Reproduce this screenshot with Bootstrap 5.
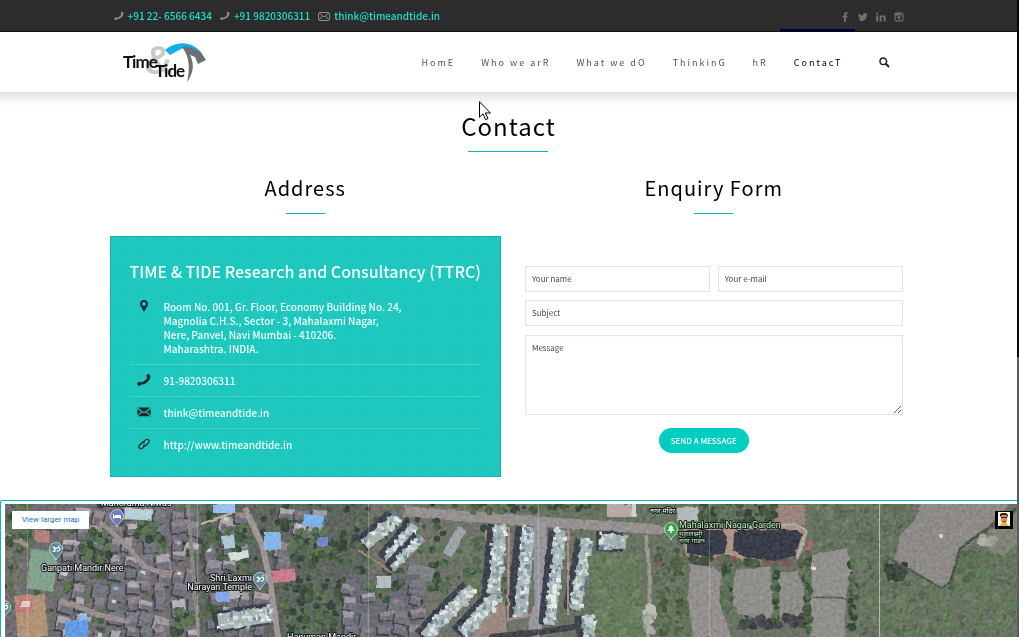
<!DOCTYPE html>
<html lang="en">
<head>
<meta charset="utf-8">
<meta name="viewport" content="width=device-width, initial-scale=1">
<title>Contact - Time &amp; Tide</title>
<link href="https://cdn.jsdelivr.net/npm/bootstrap@5.3.0/dist/css/bootstrap.min.css" rel="stylesheet">
<style>
  :root { --teal: #1ec8be; --teal-dark: #0cb8ae; }
  body { font-family: "Noto Sans CJK SC", "Open Sans", sans-serif; font-size: 10px; line-height: 14px; color: #000; padding-right: 2px; }
  a { text-decoration: none; }
  .page-width { width: 100%; max-width: 798px; }
  .top-strip { background: #2c2c2c; border-bottom: 1px solid #111; height: 32px; padding-top: 1px; font-weight: 500; }
  .top-strip a { color: #21ddcf; }
  .top-strip svg { fill: #8a8a8a; }
  .top-strip .social svg { fill: #707070; }
  .site-head { height: 60px; }
  .head-shadow { height: 14px; background: linear-gradient(#dfe2e1, #f4f6f5 60%, #fff); }
  .main-menu { gap: 26px; font-size: 9px; letter-spacing: 2px; padding-top: 2px; margin-right: 36px; }
  .main-menu a { color: #4c5260; }
  .main-menu a.current { color: #000; position: relative; }
  .main-menu a.current::before { content: ""; position: absolute; left: -14px; right: -12px; top: -27px; height: 3px; background: #02022e; }
  .search { margin-right: 18px; }
  h1 { font-size: 24px; line-height: 36px; letter-spacing: 1px; font-weight: 400; margin: 0 0 7px; padding-top: 2px; }
  h2 { font-size: 20px; line-height: 28px; letter-spacing: 1px; font-weight: 400; margin: 0 0 11px; }
  .rule { height: 1px; background: var(--teal-dark); width: 80px; }
  .rule-short { width: 39px; margin-bottom: 22px; }
  .blocks { margin-top: 22px; }
  .two-up { grid-template-columns: 389fr 380fr; column-gap: 24px; padding-right: 5px; }
  .info-panel { background-color: var(--teal); background-image: radial-gradient(#2fccc2 1px, transparent 1px), radial-gradient(#1bc2b8 1px, transparent 1px); background-size: 14px 10px, 14px 10px; background-position: 0 0, 7px 5px; border: 1px solid var(--teal-dark); color: #f4fffd; padding: 20px 19px 16px; font-weight: 500; }
  .info-panel h3 { font-size: 16px; line-height: 28px; font-weight: 500; margin: 0 0 6px; white-space: nowrap; }
  .info-panel a { color: inherit; }
  .info-panel li { display: flex; padding: 9px 0 8px; border-top: 1px solid #3fd2c8; }
  .info-panel li:first-child { border-top: 0; }
  .info-panel li svg { width: 14px; height: 12px; flex: none; margin: 0 13px 0 7px; fill: #22282b; }
  .enquiry { padding-top: 30px; }
  .field { border: 1px solid #e3e3e3; border-radius: 0; font-size: 8px; line-height: 14px; padding: 5px 6px; color: #333; background: #fff; box-shadow: inset 0 0 2px #f4f4f4; }
  .field::placeholder { color: #4b4b4b; opacity: 1; }
  textarea.field { height: 80px; margin-top: 9px; }
  .send-row { padding-right: 20px; margin-top: 13px; }
  .send { background: #00cec3; color: #fff; font-size: 8px; line-height: 13px; font-weight: 500; padding: 6px 12px; border: 0; border-radius: 13px; }
  .send:hover { background: var(--teal-dark); color: #fff; }
  .map-frame { border: 1px solid var(--teal-dark); border-bottom: 0; border-right: 0; border-radius: 3px 0 0 0; padding: 3px 0 0 4px; min-height: 136px; margin-top: 23px; }
  .map-frame svg.satellite { position: absolute; inset: 0; width: 100%; height: 100%; }
  .satellite text { font-family: Roboto, "Noto Sans", sans-serif; font-size: 9px; fill: #fff; stroke: #15181a; stroke-width: 2px; paint-order: stroke; stroke-linejoin: round; }
  .satellite .park { fill: #b9f5b4; }
  .larger { left: 7px; top: 7px; width: 77px; font: 8px/18px Roboto, sans-serif; background: #fff; color: #2272c3; }
  .avatar { right: 4px; top: 7px; width: 18px; height: 18px; background: #000; }
  .scroll-track { position: fixed; right: 0; top: 0; bottom: 0; width: 2px; background: #5c5c5c; }
  .scroll-track span { display: block; height: 56%; background: #0a0a0c; }
  .pointer { position: absolute; left: 18px; top: -5px; }
</style>
</head>
<body class="d-flex flex-column min-vh-100 overflow-hidden">
<svg class="d-none" xmlns="http://www.w3.org/2000/svg">
  <symbol id="i-phone" viewBox="0 0 14 12"><path d="M9.800.8C10.500-.1 11.600-.1 12.300.6l1 1.200c.5 3.900-3.700 8.400-8.400 8.600L4.300 11 1.500 12 .3 10.300c-.3-.9 0-1.500.7-1.800l2.300-.7 1.200.7c2.700-.9 5-3 5.700-4.900L9.600 2.700z"/></symbol>
  <symbol id="i-mail" viewBox="0 0 14 12"><path d="M.5 1.500h13L7 6.200zM.3 3l4 2.700L.3 9.200zM13.700 3l-4 2.700 4 3.500zM5.200 6.300 7 7.500l1.800-1.200 4.400 4H.8z"/></symbol>
</svg>

<div class="top-strip">
  <div class="page-width mx-auto d-flex align-items-center h-100 ps-1 pe-1">
    <svg width="10" height="10" class="me-1"><use href="#i-phone"/></svg><a href="tel:+912265666434">+91 22- 6566 6434</a>
    <svg width="10" height="10" class="me-1 ms-2"><use href="#i-phone"/></svg><a href="tel:+919820306311">+91 9820306311</a>
    <svg width="12" height="9" viewBox="0 0 12 9" class="me-1 ms-2"><path fill="none" stroke="#8a8a8a" d="M1.500.5h9l1 1v6l-1 1h-9l-1-1v-6zM1 1l5 4 5-4M1 8l3.500-4M11 8 7.500 4"/></svg><a href="mailto:think@timeandtide.in">think@timeandtide.in</a>
    <div class="social d-flex gap-2 ms-auto">
      <a href="#" aria-label="Facebook"><svg width="10" height="10" viewBox="0 0 10 10"><path d="M4 10V5.500H2.500V3.700H4V2.400C4 .9 4.800.2 6.200.2h1.300V2H6.600c-.5 0-.7.200-.7.700v1h1.600l-.2 1.800H5.900V10z"/></svg></a>
      <a href="#" aria-label="Twitter"><svg width="10" height="10" viewBox="0 0 10 10"><path d="M0 8.100c1.200 0 2-.2 2.800-.8C1.800 7.200 1.200 6.700.9 5.900h.9C.8 5.500.3 4.800.3 3.800l.9.3C.2 3.300.1 2.300.6 1.300 1.800 2.700 3.200 3.400 4.900 3.500 4.700 1.900 5.600.9 6.900.9c.6 0 1.100.2 1.500.6L9.700 1 8.800 2.200l1.200-.3-1.100 1.200C9 6.500 6.600 9.100 3.300 9.100 2.100 9.100 1 8.800 0 8.100z"/></svg></a>
      <a href="#" aria-label="LinkedIn"><svg width="10" height="10" viewBox="0 0 10 10"><path d="M.2 3.400h2V9.500h-2zM1.200.5a1.100 1.100 0 110 2.200 1.100 1.100 0 010-2.200zM3.600 3.400h1.900v.8C6.600 2.700 9.800 2.900 9.800 6v3.500h-2V6.400C7.800 4.400 5.600 4.500 5.600 6.400v3.100h-2z"/></svg></a>
      <a href="#" aria-label="Instagram"><svg width="10" height="10" viewBox="0 0 10 10"><path fill-rule="evenodd" d="M1.500.5h7l1 1v7l-1 1h-7l-1-1v-7zM7 1.500V3h1.500V1.500zM.5 4h1.600v.8H1.500v3.400h7V4.800H7.900V4H9.500v-.3H6.800L5 3 3.200 3.700H.5zM5 3.900a1.500 1.500 0 100 3 1.500 1.500 0 000-3z"/></svg></a>
    </div>
  </div>
</div>

<header class="site-head">
  <div class="page-width mx-auto d-flex align-items-center h-100">
    <a href="#" class="ms-2 ps-1" aria-label="Time and Tide">
      <svg width="86" height="46" viewBox="0 0 86 46" class="d-block" font-family="Lato, sans-serif" font-weight="700">
        <text x="22" y="35" font-size="40" font-family="Liberation Sans, sans-serif" fill="#c9c9c9">&amp;</text>
        <path fill="#0fb0ea" d="M43 11C56 0 73 3 81 16L61 9 48 16z"/>
        <path fill="#6f7074" d="M60 8c11-1 19 4 24 13l-8 4-3-7-5-2C73 26 71 35 65 43 68 31 68 18 60 8z"/>
        <text x="1" y="29" font-size="17" letter-spacing="-1" fill="#111">Time</text>
        <text x="33" y="38" font-size="17" letter-spacing="-1" fill="#111">Tide</text>
      </svg>
    </a>
    <nav class="main-menu d-flex align-items-center ms-auto" aria-label="Main">
      <a href="#">HomE</a><a href="#">Who we arR</a><a href="#">What we dO</a><a href="#">ThinkinG</a><a href="#">hR</a><a href="#" class="current">ContacT</a>
    </nav>
    <a href="#" class="search" aria-label="Search"><svg width="11" height="11" viewBox="0 0 11 11" class="d-block"><path fill="none" stroke="#222" stroke-width="1.500" d="M4.300 1a3.300 3.300 0 110 6.600 3.300 3.300 0 010-6.600z"/><path stroke="#222" stroke-width="2" d="M6.800 6.700l3.300 3.300"/></svg></a>
  </div>
</header>
<div class="head-shadow"></div>

<main class="flex-grow-1 d-flex flex-column">
  <div class="text-center position-relative mx-auto">
    <h1>Contact</h1>
    <svg class="pointer" width="12" height="20" viewBox="0 0 12 20"><path fill="#fff" stroke="#000" d="M.5.700v15.500l3.500-3.400 2.600 5.800 2.400-1-2.600-5.600h5z"/></svg>
    <div class="rule mx-auto"></div>
  </div>
  <div class="page-width mx-auto blocks">
    <div class="two-up d-grid">
      <section>
        <h2 class="text-center">Address</h2>
        <div class="rule rule-short mx-auto"></div>
        <div class="info-panel">
          <h3>TIME &amp; TIDE Research and Consultancy (TTRC)</h3>
          <ul class="list-unstyled m-0">
            <li><svg viewBox="0 0 14 12"><path fill-rule="evenodd" d="M7 0c2.300 0 3.900 1.600 3.900 3.700C10.900 6.300 8.500 8.500 7 12 5.500 8.500 3.100 6.300 3.100 3.700 3.100 1.600 4.700 0 7 0zm0 1.900a2 2 0 100 4 2 2 0 000-4z"/></svg><span>Room No. 001, Gr. Floor, Economy Building No. 24,<br>Magnolia C.H.S., Sector - 3, Mahalaxmi Nagar,<br>Nere, Panvel, Navi Mumbai - 410206.<br>Maharashtra. INDIA.</span></li>
            <li><svg><use href="#i-phone"/></svg><a href="tel:919820306311">91-9820306311</a></li>
            <li><svg><use href="#i-mail"/></svg><a href="mailto:think@timeandtide.in">think@timeandtide.in</a></li>
            <li><svg viewBox="0 0 14 12"><g fill="none" stroke="#22282b" stroke-width="1.200"><path d="M6 4.500l2.500-2.600c1.500-1.500 5 .2 3.200 2.600L9.400 7C8.300 8 6.700 7.500 6.200 6.600"/><path d="M8 7.500l-2.500 2.600C4 11.600.5 9.900 2.300 7.500L4.600 5c1.100-1 2.700-.5 3.200.4"/></g></svg><a href="http://www.timeandtide.in">http://www.timeandtide.in</a></li>
          </ul>
        </div>
      </section>
      <section>
        <h2 class="text-center">Enquiry Form</h2>
        <div class="rule rule-short mx-auto"></div>
        <form class="enquiry">
          <div class="d-flex gap-2 mb-2">
            <input class="field form-control" type="text" placeholder="Your name" aria-label="Your name">
            <input class="field form-control" type="email" placeholder="Your e-mail" aria-label="Your e-mail">
          </div>
          <input class="field form-control" type="text" placeholder="Subject" aria-label="Subject">
          <textarea class="field form-control" placeholder="Message" aria-label="Message"></textarea>
          <div class="text-center send-row"><button type="button" class="btn send">SEND A MESSAGE</button></div>
        </form>
      </section>
    </div>
  </div>
  <section class="map-frame d-flex flex-grow-1" aria-label="Map">
    <div class="position-relative flex-grow-1 overflow-hidden">
      <svg class="satellite" viewBox="5 504 1012 133" preserveAspectRatio="xMinYMin slice" xmlns="http://www.w3.org/2000/svg">
        <defs>
          <filter id="rough" x="0" y="0" width="100%" height="100%"><feTurbulence type="fractalNoise" baseFrequency=".12" numOctaves="2" seed="4" result="n"/><feDisplacementMap in="SourceGraphic" in2="n" scale="3" xChannelSelector="R" yChannelSelector="G"/><feGaussianBlur stdDeviation=".5"/></filter>
          <filter id="speckle" x="0" y="0" width="100%" height="100%"><feTurbulence type="fractalNoise" baseFrequency=".3" numOctaves="3" seed="9"/><feColorMatrix values=".7 .7 0 0 -.15  .7 .7 0 0 -.15  .7 .7 0 0 -.15  0 0 0 0 1"/></filter>
        </defs>
        <rect x="5" y="504" width="1012" height="133" fill="#56604f"/>
        <g id="ground" filter="url(#rough)"></g>
        <rect x="5" y="504" width="1012" height="133" filter="url(#speckle)" opacity=".6" style="mix-blend-mode:soft-light"/>
        <g stroke="#fff" opacity=".5"><path opacity=".4" d="M27.500 504v133M197.500 504v133M368.500 504v133M538.500 504v133M709.500 504v133"/><path d="M879.500 504v133"/></g>
        <g id="pins"></g>
        <g>
          <text x="101" y="506">Manorama Niwas</text>
          <text x="41" y="571">Ganpati Mandir Nere</text>
          <text x="252" y="581" text-anchor="end">Shri Laxmi</text>
          <text x="252" y="590" text-anchor="end">Narayan Temple</text>
          <text x="287" y="640">Hanuman Mandir</text>
          <text class="park" x="679" y="528">Mahalaxmi Nagar Garden</text>
          <text class="park" x="679" y="536" style="font-size:7px">महालक्ष्मी</text>
          <text class="park" x="679" y="543" style="font-size:7px">नगर गार्डन</text>
          <text x="650" y="513" style="font-size:7px">नगर मंदिर</text>
        </g>
      </svg>
      <a href="#" class="larger position-absolute text-center">View larger map</a>
      <svg class="avatar position-absolute" viewBox="0 0 18 18"><path fill="#fff8dc" d="M3 1h12v14H3z"/><path fill="#d99058" d="M6 4h6v6l-2 3H8l-2-3z"/><path fill="#35190f" d="M5 6V3l2-1h4l2 2v2l-2-2H7zM6 6h6v1H6z"/><path fill="#e9b23c" d="M4 15l3-3h4l3 3z"/><path fill="#b8322c" d="M8 10h3v1H8z"/></svg>
    </div>
  </section>
</main>
<div class="scroll-track"><span></span></div>

<script>
(function () {
  var seed = 7;
  function rnd() { seed = (seed * 16807) % 2147483647; return seed / 2147483647; }
  function pick(a) { return a[Math.floor(rnd() * a.length)]; }
  var out = [];
  function poly(c, pts) { out.push('<polygon fill="' + c + '" points="' + pts + '"/>'); }
  function road(c, w, d) { out.push('<path fill="none" stroke="' + c + '" stroke-width="' + w + '" d="' + d + '"/>'); }
  function box(c, x, y, w, h, a) { out.push('<rect fill="' + c + '" x="' + x + '" y="' + y + '" width="' + w + '" height="' + h + '" transform="rotate(' + (a || 0) + ' ' + x + ' ' + y + ')"/>'); }
  function trees(x, y, w, h, n, cs) {
    cs = cs || ['#26352a', '#33472f', '#425a3c', '#4c6343'];
    for (var i = 0; i < n; i++) out.push('<circle fill="' + pick(cs) + '" cx="' + (x + rnd() * w) + '" cy="' + (y + rnd() * h) + '" r="' + (1.5 + rnd() * 3) + '"/>');
  }
  function roofs(x, y, w, h) {
    for (var j = y; j < y + h; j += 15) for (var i = x; i < x + w; i += 16) {
      var a = pick([-8, 4, 10, 14]), u = i + rnd() * 6, v = j + rnd() * 5, bw = 8 + rnd() * 8, bh = 8 + rnd() * 9;
      if (rnd() < .12) { trees(u, v, 10, 9, 9); continue; }
      box('#33333b', u - 2, v + 2, bw, bh, a);
      box(pick(['#7f7e8a', '#8f8d95', '#6d6b76', '#9b979c', '#777079', '#87777a', '#636773', '#aba6a8']), u, v, bw, bh, a);
      box('#605e69', u, v + bh / 2, bw, bh / 2, a);
      if (rnd() < .25) box(pick(['#b9c4c8', '#a5705f', '#8da6bd', '#c9cdd0']), u + 3, v + 2, 4, 3, a);
    }
  }
  function towers(x1, y1, x2, y2, w) {
    var len = Math.hypot(x2 - x1, y2 - y1), n = Math.round(len / 4), ux = (x2 - x1) / len, uy = (y2 - y1) / len;
    road('#2c2e3a', w + 5, 'M' + (x1 - 4) + ' ' + y1 + 'L' + (x2 - 4) + ' ' + y2);
    road('#9aa8a6', w - 1, 'M' + x1 + ' ' + y1 + 'L' + x2 + ' ' + y2);
    for (var i = 0; i < n * 4; i++) {
      var t = rnd() * len, s = (rnd() - .5) * w;
      box(pick(['#d3dfdc', '#b4c8c7', '#a6b8b5', '#7f9296', '#e0e7e3', '#587793', '#96a7a1', '#c4cfcb']), x1 + ux * t - uy * s - 2, y1 + uy * t + ux * s - 2, 2 + rnd() * 3, 2 + rnd() * 3, 0);
    }
  }
  /* village, left */
  poly('#5c5a5c', '5,504 200,504 200,637 5,637');
  trees(5, 504, 195, 133, 110);
  roofs(58, 506, 138, 128);
  road('#8a807e', 5, 'M5 535L28 545M100 522L132 550 143 566 160 572 M60 600L100 615 130 622'); road('#7c7472', 4, 'M188 504L192 560 199 637');
  trees(5, 504, 28, 40, 30); trees(80, 532, 30, 26, 34); trees(135, 522, 25, 20, 18); trees(7, 546, 18, 45, 24, ['#5a5c50', '#4f5a47', '#6d6a60']);
  poly('#6f957b', '31,549 57,551 54,592 27,588');
  poly('#a58365', '14,596 45,594 48,637 18,637');
  box('#b76b68', 17, 596, 16, 16, 4); box('#d6c5c2', 21, 601, 9, 6, 0);
  box('#a96e68', 35, 530, 15, 12, 4); box('#4f8ce2', 65, 620, 23, 18, 0); box('#7fb0e6', 80, 613, 7, 8, 0);
  box('#aec8d0', 125, 508, 28, 11, 3);
  /* middle houses */
  poly('#4b514c', '200,504 370,504 370,637 200,637');
  trees(200, 504, 170, 133, 190);
  roofs(203, 512, 45, 60); roofs(205, 590, 55, 40); roofs(275, 506, 35, 56);
  road('#8f8783', 6, 'M245 508L262 545 270 580 278 637'); road('#b3ad8c', 2, 'M201 524L232 513');
  trees(205, 530, 40, 20, 22); trees(300, 530, 45, 30, 50); trees(285, 585, 60, 48, 100);
  box('#8bb7e8', 213, 504, 22, 9, 0); box('#6ba6e6', 304, 514, 20, 12, 4); box('#76a8e0', 264, 532, 17, 18, 0);
  box('#759bdc', 216, 592, 14, 10, 0); box('#9fbdcc', 222, 536, 12, 13, -6); box('#c8d8d2', 229, 553, 19, 8, -10);
  box('#c0677a', 272, 571, 23, 12, -6); box('#6373bf', 318, 537, 10, 9, 0);
  towers(218, 622, 272, 614, 17);
  /* colony */
  poly('#5c6156', '368,504 545,504 545,637 368,637');
  trees(340, 504, 170, 100, 170);
  road('#85817f', 10, 'M404 511L460 516 545 522 640 528 670 532');
  road('#a0756a', 2, 'M358 550L392 572 425 540M486 530L488 585');
  towers(398, 517, 365, 545, 12); towers(415, 525, 388, 560, 11); towers(422, 537, 392, 568, 7);
  box('#8c979b', 458, 526, 10, 30, 30); box('#6b7174', 410, 562, 26, 14, 15);
  trees(466, 540, 18, 40, 34, ['#4b6445', '#5a704e', '#3d5238']);
  poly('#575960', '345,575 420,575 415,637 345,637'); roofs(342, 578, 70, 55); box('#a8b1b2', 376, 576, 15, 12, 0);
  poly('#8b7870', '460,637 505,600 507,637');
  towers(473, 588, 425, 637, 13); towers(499, 594, 462, 634, 13);
  towers(501, 525, 494, 594, 13); towers(529, 527, 520, 618, 14);
  road('#86878b', 13, 'M540 520L541 600 533 637'); road('#a97f75', 2, 'M509 527L508 620 545 612');
  towers(561, 530, 550, 625, 11); towers(588, 540, 575, 610, 12); towers(600, 541, 626, 542, 15); towers(587, 615, 590, 637, 13);
  road('#9a7c72', 2, 'M568 528L568 615'); road('#2f3038', 6, 'M490 637L540 632 580 626');
  trees(470, 500, 130, 12, 70); box('#ad9c99', 607, 504, 25, 13, 0); box('#c8c7c0', 632, 504, 4, 13, 0);
  /* fields, right */
  poly('#55674c', '587,556 640,556 645,637 600,637');
  trees(595, 556, 47, 80, 75, ['#4e6845', '#5b714d', '#496341', '#5f7552']);
  poly('#56604f', '648,535 1017,504 1017,637 648,637');
  trees(655, 550, 38, 87, 130, ['#35452f', '#445639', '#4f6145', '#5b6a50']); road('#8b867b', 4, 'M646 535L650 580 648 637'); trees(646, 606, 8, 26, 26, ['#9c9f98', '#848882', '#b2b3ad']);
  box('#a8adb0', 677, 508, 25, 14, -4); box('#8c726a', 775, 505, 30, 20, 0); trees(700, 504, 75, 18, 65);
  poly('#a08372', '683,524 725,529 795,523 808,532 800,556 760,562 686,556');
  trees(655, 557, 160, 10, 80, ['#2f3b2e', '#3c4b36', '#4a5a42', '#6a4c48']);
  poly('#252c36', '687,530 722,530 727,537 725,553 708,557 687,553');
  poly('#252c36', '734,533 744,529 797,530 802,535 795,556 774,561 745,557 733,551');
  road('#9ba79b', 2, 'M734 528L795 524 806 531 797 559');
  road('#9d584f', 5, 'M812 540L806 554');
  poly('#827f7c', '690,564 714,567 722,575 719,600 731,637 693,637 688,600');
  poly('#807e7a', '736,570 770,566 774,600 772,620 738,614 731,597');
  poly('#7c7b77', '779,572 797,572 805,590 803,615 780,618');
  poly('#807f7c', '812,555 848,548 852,570 846,596 845,637 810,637');
  road('#46503f', 2, 'M812 597L847 598');
  trees(740, 616, 66, 12, 50, ['#2b2733', '#38363b', '#2f3f2d']); trees(724, 566, 7, 46, 30); trees(774, 568, 3, 56, 20); trees(806, 552, 3, 82, 34); trees(850, 545, 5, 90, 36);
  trees(815, 504, 65, 44, 120, ['#55644b', '#47573f', '#616b53', '#506046']); trees(854, 550, 162, 87, 330, ['#55664b', '#4c5e43', '#5c6d51', '#43543c', '#4b6b43']);
  trees(882, 504, 40, 50, 80, ['#51604a', '#5d6754', '#485943']);
  poly('#7d7976', '921,504 1010,504 975,540 960,552 952,582 940,588 895,560 900,535 915,520');
  poly('#6d7265', '980,538 1017,510 1017,545 1003,556 985,548');
  trees(885, 565, 20, 14, 26, ['#27302a', '#303b31']); road('#3b4537', 2, 'M885 556L942 588 953 580');
  road('#394536', 3, 'M1017 508L960 548 950 585'); trees(981, 537, 14, 7, 16, ['#a9a59b', '#8f9085']);
  box('#d8c7a8', 939, 534, 4, 4, 0); box('#e8d9c8', 812, 567, 4, 4, 0);
  document.getElementById('ground').innerHTML = out.join('');

  function pin(x, y, c, inner) {
    return '<g transform="translate(' + x + ' ' + y + ')"><path fill="' + c + '" stroke="#e8eef0" stroke-width=".7" d="M0 10C-1 6-6.500 4-6.500-1A6.500 6.500 0 016.500-1C6.500 4 1 6 0 10z"/>' + inner + '</g>';
  }
  var om = '<path fill="none" stroke="#fff" stroke-width="1.200" d="M-3.500-2.500c3-1.500 3 1.500 1.200 1.500 2.300 0 2 3.500-1.200 2M-1-1C1-1 1-3 3-2.500S3 2 .8.800M2-4l1.500-.3"/>';
  document.getElementById('pins').innerHTML =
    pin(56, 550, '#5d8795', om) + pin(260, 580, '#5d8795', om) + pin(4, 608, '#5d8795', om) +
    pin(117, 517, '#7378c4', '<path fill="#fff" d="M-4-3h1v2h1v-1h5l1 1v3H3V1h-6v1h-1z"/>') +
    pin(671, 530, '#36a53f', '<path fill="#fff" d="M0-5l2.500 3H1.500L3.500 1H.7v2H-.7V1h-2.800l2-3h-1z"/>');
})();
</script>
<script src="https://cdn.jsdelivr.net/npm/bootstrap@5.3.0/dist/js/bootstrap.bundle.min.js"></script>
</body>
</html>
